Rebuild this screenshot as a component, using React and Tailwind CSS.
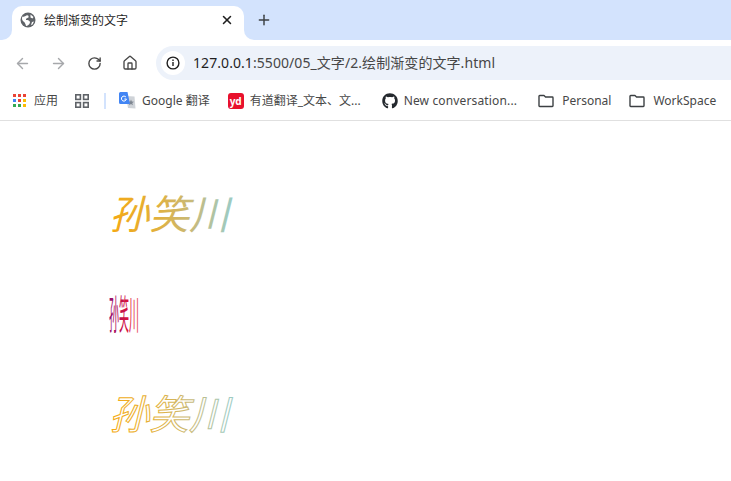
import React from "react";
import { ArrowLeft, ArrowRight, RotateCw, House, X, Plus } from "lucide-react";
import { FaGithub } from "react-icons/fa";

const ui = { fontFamily: '"Noto Sans","Noto Sans CJK SC",sans-serif' };
const cjk = { fontFamily: '"Noto Sans CJK SC",sans-serif' };

function Globe() {
  return (
    <svg width="16" height="16" viewBox="0 0 16 16">
      <circle cx="8" cy="8" r="7.5" fill="#5f6368" />
      <path d="M2.5 4.5C4 5 5 4.5 6.5 3.5 8 3 9 4 8.5 5.5 7 6.5 5.5 6.5 6 8 8 8 10 8.5 10 10.5 9.5 12.5 7.5 14 6 14 5.5 12 5 10.5 3.5 9.5 2 8.5 1.5 6 2.5 4.5Z" fill="#fff" />
      <path d="M10.5 2.5 13.5 5 12.5 6.5 10.5 5.5Z M12 10 14 9.5 12.5 12.5 11 13Z" fill="#fff" />
    </svg>
  );
}

function Apps() {
  const c = ["#ea4335", "#ea4335", "#ea4335", "#4285f4", "#ea4335", "#fbbc04", "#34a853", "#34a853", "#fbbc04"];
  return (
    <div className="grid grid-cols-3 gap-[2px] w-[13px] h-[13px]">
      {c.map((x, i) => (
        <svg key={i} width="3" height="3" viewBox="0 0 3 3"><rect width="3" height="3" fill={x} /></svg>
      ))}
    </div>
  );
}

function Squares() {
  return (
    <svg width="16" height="16" viewBox="0 0 16 16" fill="none" stroke="#5f6368" strokeWidth="1.6">
      <rect x="1.8" y="1.8" width="4.6" height="4.6" />
      <rect x="9.6" y="1.8" width="4.6" height="4.6" />
      <rect x="1.8" y="9.6" width="4.6" height="4.6" />
      <rect x="9.6" y="9.6" width="4.6" height="4.6" />
    </svg>
  );
}

function Translate() {
  return (
    <svg width="17" height="17" viewBox="0 0 17 17">
      <path d="M7 4 15.5 4.5 16.5 16.5 9 16Z" fill="#cfd3d8" />
      <path d="M12 7.5 12.8 9.6 15 9.7 13.3 11 13.9 13.2 12 12 10.1 13.2 10.7 11 9 9.7 11.2 9.6Z" fill="#7d8590" />
      <path d="M1.5 0H8.5L11 12H1.5A1.5 1.5 0 0 1 0 10.5V1.5A1.5 1.5 0 0 1 1.5 0Z" fill="#4285f4" />
      <path d="M7 5.2A2.5 2.5 0 1 0 7.4 7H5.4" fill="none" stroke="#fff" strokeWidth="1" />
    </svg>
  );
}

function Folder() {
  return (
    <svg width="16" height="16" viewBox="0 0 16 16" fill="none" stroke="#3c4043" strokeWidth="1.4" strokeLinejoin="round">
      <path d="M1 3.2A.7.7 0 0 1 1.7 2.5H6L7.5 4H14.3A.7.7 0 0 1 15 4.7V12.8A.7.7 0 0 1 14.3 13.5H1.7A.7.7 0 0 1 1 12.8Z" />
    </svg>
  );
}

function Bookmark({ icon, label, className = "", labelClass = "" }) {
  return (
    <div className={"flex items-center gap-[6px] shrink-0 " + className}>
      {icon}
      <span className={"text-[12px] text-[#474747] whitespace-nowrap leading-none " + labelClass}>{label}</span>
    </div>
  );
}

function Art({ id, outline, narrow }) {
  return (
    <svg width="160" height="60" viewBox="0 0 160 60" className="block overflow-visible">
      <defs>
        <linearGradient id={id} gradientUnits="userSpaceOnUse" x1="0" y1="0" x2="160" y2="0">
          {narrow ? (
            <>
              <stop offset="0" stopColor="#6a1b9a" />
              <stop offset="0.09" stopColor="#a5105f" />
              <stop offset="0.17" stopColor="#d8123c" />
              <stop offset="0.27" stopColor="#e8505a" />
            </>
          ) : (
            <>
              <stop offset="0" stopColor="#f9a60a" />
              <stop offset="0.35" stopColor="#e2b03c" />
              <stop offset="0.6" stopColor="#c4bb82" />
              <stop offset="0.8" stopColor="#9fcabf" />
            </>
          )}
        </linearGradient>
      </defs>
      <text
        x="9"
        y="46"
        fontSize="40"
        textLength={narrow ? 30 : undefined}
        lengthAdjust={narrow ? "spacingAndGlyphs" : undefined}
        fontStyle={narrow ? "normal" : "italic"}
        fontWeight="400"
        style={cjk}
        fill={outline ? "none" : `url(#${id})`}
        stroke={outline ? `url(#${id})` : "none"}
        strokeWidth={outline ? 1 : 0}
      >
        孙笑川
      </text>
    </svg>
  );
}

export default function App() {
  return (
    <div className="w-[731px] h-[481px] overflow-hidden bg-white flex flex-col" style={ui}>
      <div className="h-[40px] bg-[#d3e3fd] flex items-start pl-[12px] pt-[6px] shrink-0">
        <div className="relative w-[232px] h-[34px] bg-white rounded-t-[10px] flex items-center pl-[8px] pr-[9px] pb-[6px]">
          <div className="absolute left-[-10px] bottom-0 w-[10px] h-[10px] bg-white">
            <div className="w-full h-full bg-[#d3e3fd] rounded-br-[10px]" />
          </div>
          <div className="absolute right-[-10px] bottom-0 w-[10px] h-[10px] bg-white">
            <div className="w-full h-full bg-[#d3e3fd] rounded-bl-[10px]" />
          </div>
          <Globe />
          <span className="ml-[8px] text-[12px] text-[#1f1f1f] leading-none" style={cjk}>绘制渐变的文字</span>
          <X size={14} strokeWidth={2.6} color="#1f1f1f" className="ml-auto mr-[1px]" />
        </div>
        <Plus size={16} strokeWidth={2.2} color="#3c4043" className="ml-[12px] mt-[6px]" />
      </div>

      <div className="h-[40px] bg-white flex items-center pl-[14px] pt-[6px] shrink-0">
        <ArrowLeft size={17} strokeWidth={2} color="#a6a8ab" />
        <ArrowRight size={17} strokeWidth={2} color="#a6a8ab" className="ml-[19px]" />
        <RotateCw size={15} strokeWidth={2.2} color="#474747" className="ml-[20px]" />
        <House size={16} strokeWidth={2} color="#474747" className="ml-[20px]" />
        <div className="ml-[18px] flex-1 h-[34px] bg-[#edf2fa] rounded-l-full flex items-center pl-[5px]">
          <div className="w-[24px] h-[24px] rounded-full bg-white flex items-center justify-center">
            <svg width="14" height="14" viewBox="0 0 14 14" fill="none" stroke="#1f1f1f" strokeWidth="1.4">
              <circle cx="7" cy="7" r="5.9" />
              <path d="M7 6v4M7 3.6v1.3" />
            </svg>
          </div>
          <span className="ml-[8px] text-[14px] tracking-[0.07px] leading-none whitespace-nowrap text-[#1f1f1f]">
            127.0.0.1<span className="text-[#474747]">:5500/05_文字/2.绘制渐变的文字.html</span>
          </span>
        </div>
      </div>

      <div className="h-[41px] bg-white border-b border-[#e0e0e0] flex items-center pl-[13px] pt-[1px] shrink-0 overflow-hidden">
        <Bookmark icon={<Apps />} label="应用" className="gap-[8px]" />
        <div className="ml-[16px]"><Squares /></div>
        <div className="ml-[14px] w-[2px] h-[16px] bg-[#d3e3fd]" />
        <Bookmark icon={<Translate />} label="Google 翻译" className="ml-[13px] gap-[5px]" />
        <Bookmark
          icon={
            <div className="w-[16px] h-[16px] rounded-[3px] bg-[#e8112d] flex items-center justify-center text-white text-[10px] font-bold leading-none">yd</div>
          }
          label="有道翻译_文本、文..."
          className="ml-[18px]"
        />
        <Bookmark icon={<FaGithub size={16} color="#24292e" />} label="New conversation..." labelClass="tracking-[0.15px]" className="ml-[21px]" />
        <Bookmark icon={<Folder />} label="Personal" className="ml-[21px] gap-[8px]" />
        <Bookmark icon={<Folder />} label="WorkSpace" className="ml-[18px] gap-[8px]" />
      </div>

      <div className="flex-1 pl-[100px] pt-[62px] flex flex-col gap-[40px]">
        <Art id="g1" />
        <Art id="g2" narrow />
        <Art id="g3" outline />
      </div>
    </div>
  );
}
